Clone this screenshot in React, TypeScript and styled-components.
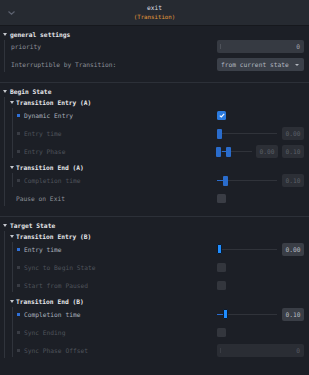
import React from 'react';
import styled, {createGlobalStyle} from 'styled-components';

type Tone = 'plain' | 'active' | 'dim';

const GlobalStyle = createGlobalStyle`
    html, body {
        margin: 0;
        padding: 0;
        background: #1c1f26;
    }
    body {
        font-family: "DejaVu Sans Mono", "Liberation Mono", monospace;
        font-size: 6.25px;
        color: #8d9199;
    }
`;

const Panel = styled.div`
    width: 309px;
    min-height: 375px;
    background: #1c1f26;
`;

const Header = styled.header`
    height: 26px;
    box-sizing: border-box;
    display: grid;
    grid-template-columns: 22px 1fr 22px;
    align-items: center;
    background: #262a31;
    border-bottom: 1px solid #16181d;
`;

const HeaderIcon = styled.span`
    display: flex;
    justify-content: center;
`;

const Titles = styled.div`
    display: flex;
    flex-direction: column;
    align-items: center;
    gap: 3px;
`;

const Title = styled.span`
    color: #dcdde0;
    line-height: 7px;
`;

const Subtitle = styled.span`
    color: #e39a3b;
    font-size: 5.75px;
    line-height: 7px;
`;

const Section = styled.section<{$top: number; $line?: boolean}>`
    padding: ${p => p.$top}px 5px 10px 0;
    border-bottom: ${p => p.$line ? '1px solid #2c3038' : 'none'};
`;

const Heading = styled.div<{$sub?: boolean; $mt?: number}>`
    height: 11px;
    display: flex;
    align-items: center;
    gap: ${p => p.$sub ? 2 : 3}px;
    padding-left: ${p => p.$sub ? 0 : 3}px;
    margin-top: ${p => p.$mt ?? 0}px;
    color: #e6e7ea;
    font-weight: bold;
`;

const Caret = styled.span`
    width: 0;
    height: 0;
    border-left: 2px solid transparent;
    border-right: 2px solid transparent;
    border-top: 3px solid #c4c7cd;
`;

const Group = styled.div<{$inset: number; $pad: number; $top?: number; $bottom?: number}>`
    display: flex;
    flex-direction: column;
    margin-left: ${p => p.$inset}px;
    padding: ${p => p.$top ?? 0}px 0 ${p => p.$bottom ?? 0}px ${p => p.$pad}px;
    border-left: 1px solid #30343c;
`;

const Row = styled.div<{$mt?: number}>`
    display: grid;
    grid-template-columns: 1fr 87px;
    align-items: center;
    height: 13px;
    margin-top: ${p => p.$mt ?? 0}px;
    & + & {
        margin-top: 5px;
    }
`;

const toneColor = {plain: '#8d9199', active: '#aab1bc', dim: '#4f535b'};

const Label = styled.span<{$tone: Tone; $indent?: number}>`
    display: flex;
    align-items: center;
    gap: 4.5px;
    padding-left: ${p => p.$indent ?? 0}px;
    color: ${p => toneColor[p.$tone]};
    white-space: nowrap;
`;

const Dot = styled.span<{$on?: boolean}>`
    width: 2.5px;
    height: 2.5px;
    background: ${p => p.$on ? '#2f70d8' : '#393c44'};
`;

const Field = styled.div<{$dim?: boolean}>`
    height: 13px;
    box-sizing: border-box;
    border-radius: 2px;
    display: flex;
    align-items: center;
    justify-content: space-between;
    padding: 0 4px 0 3px;
    background: ${p => p.$dim ? '#2a2d34' : '#363a42'};
    color: ${p => p.$dim ? '#565a62' : '#a2a6ae'};
`;

const Grip = styled.span<{$dim?: boolean}>`
    width: 1px;
    height: 5px;
    background: ${p => p.$dim ? '#3a3d44' : '#4e525a'};
`;

const Select = styled.div`
    height: 13px;
    box-sizing: border-box;
    border-radius: 2px;
    display: flex;
    align-items: center;
    justify-content: space-between;
    padding: 0 5px 0 4px;
    background: #3b4049;
    color: #b4b8c0;
`;

const SelectCaret = styled.span`
    width: 0;
    height: 0;
    border-left: 2px solid transparent;
    border-right: 2px solid transparent;
    border-top: 2.5px solid #b4b8c0;
`;

const Check = styled.span<{$on?: boolean; $dim?: boolean}>`
    width: 9px;
    height: 9px;
    border-radius: 1.5px;
    display: flex;
    align-items: center;
    justify-content: center;
    background: ${p => p.$on ? '#2b7be0' : p.$dim ? '#33363d' : '#3a3d45'};
`;

const Slider = styled.div<{$cols: string}>`
    display: grid;
    grid-template-columns: ${p => p.$cols};
    gap: ${p => p.$cols.includes('22px 22px') ? 4 : 5}px;
    align-items: center;
`;

const Track = styled.div`
    position: relative;
    height: 13px;
    &::before {
        content: '';
        position: absolute;
        left: 0;
        right: 0;
        top: 6px;
        height: 1px;
        background: #30333a;
    }
`;

const Fill = styled.span`
    position: absolute;
    top: 6px;
    height: 1px;
    background: #2a6ccc;
`;

const Handle = styled.span<{$active?: boolean}>`
    position: absolute;
    top: ${p => p.$active ? 1 : 1.5}px;
    width: 5px;
    height: 10px;
    box-sizing: border-box;
    border-radius: 1px;
    background: ${p => p.$active ? '#1f8dff' : '#2a6ccc'};
    border: ${p => p.$active ? '1px solid #0d1a2c' : 'none'};
`;

const ValueBox = styled.span<{$active?: boolean}>`
    height: 13px;
    border-radius: 2px;
    display: flex;
    align-items: center;
    justify-content: center;
    background: ${p => p.$active ? '#3a3e46' : '#2c2f36'};
    color: ${p => p.$active ? '#b9bdc4' : '#5b5f67'};
`;

const CheckMark = () => (
    <svg width="6" height="5" viewBox="0 0 6 5">
        <path d="M0.8 2.6 L2.3 4 L5.2 0.9" fill="none" stroke="#fff" strokeWidth="1.1"/>
    </svg>
);

const Range1 = ({value, active}: {value: number; active?: boolean}) => {
    const left = value * 55;
    return (
        <Slider $cols="1fr 22px">
            <Track>
                {left > 0 && <Fill style={{left: 0, width: left}}/>}
                <Handle $active={active} style={{left}}/>
            </Track>
            <ValueBox $active={active}>{value.toFixed(2)}</ValueBox>
        </Slider>
    );
};

const Range2 = ({from, to}: {from: number; to: number}) => (
    <Slider $cols="1fr 22px 22px">
        <Track>
            <Fill style={{left: 5, width: 4}}/>
            <Handle style={{left: -1}}/>
            <Handle style={{left: 8.5}}/>
        </Track>
        <ValueBox>{from.toFixed(2)}</ValueBox>
        <ValueBox>{to.toFixed(2)}</ValueBox>
    </Slider>
);

const Prop = ({label, tone, dot, indent, mt, children}: {
    label: string; tone: Tone; dot?: 'on' | 'off'; indent?: number; mt?: number; children: React.ReactNode;
}) => (
    <Row $mt={mt}>
        <Label $tone={tone} $indent={indent}>
            {dot && <Dot $on={dot === 'on'}/>}
            {label}
        </Label>
        <div>{children}</div>
    </Row>
);

const App: React.FunctionComponent = () => {
    return (
        <Panel>
            <GlobalStyle/>
            <Header>
                <HeaderIcon>
                    <svg width="7" height="4" viewBox="0 0 7 4">
                        <path d="M0.5 0.5 L3.5 3.2 L6.5 0.5" fill="none" stroke="#5d6270" strokeWidth="1.2"/>
                    </svg>
                </HeaderIcon>
                <Titles>
                    <Title>exit</Title>
                    <Subtitle>(Transition)</Subtitle>
                </Titles>
                <span/>
            </Header>

            <Section $top={3} $line>
                <Heading><Caret/>general settings</Heading>
                <Group $inset={4} $pad={6} $bottom={1}>
                    <Prop label="priority" tone="plain">
                        <Field><Grip/>0</Field>
                    </Prop>
                    <Prop label="Interruptible by Transition:" tone="plain">
                        <Select>from current state<SelectCaret/></Select>
                    </Prop>
                </Group>
            </Section>

            <Section $top={3} $line>
                <Heading><Caret/>Begin State</Heading>
                <Group $inset={4} $pad={5} $bottom={1}>
                    <Heading $sub><Caret/>Transition Entry (A)</Heading>
                    <Group $inset={2} $pad={4} $top={1}>
                        <Prop label="Dynamic Entry" tone="active" dot="on">
                            <Check $on><CheckMark/></Check>
                        </Prop>
                        <Prop label="Entry time" tone="dim" dot="off">
                            <Range1 value={0}/>
                        </Prop>
                        <Prop label="Entry Phase" tone="dim" dot="off">
                            <Range2 from={0} to={0.1}/>
                        </Prop>
                    </Group>
                    <Heading $sub $mt={4}><Caret/>Transition End (A)</Heading>
                    <Group $inset={2} $pad={4} $top={1}>
                        <Prop label="Completion time" tone="dim" dot="off">
                            <Range1 value={0.1}/>
                        </Prop>
                    </Group>
                    <Prop label="Pause on Exit" tone="plain" indent={6} mt={5}>
                        <Check/>
                    </Prop>
                </Group>
            </Section>

            <Section $top={3}>
                <Heading><Caret/>Target State</Heading>
                <Group $inset={4} $pad={5} $bottom={1}>
                    <Heading $sub><Caret/>Transition Entry (B)</Heading>
                    <Group $inset={2} $pad={4} $top={1}>
                        <Prop label="Entry time" tone="active" dot="on">
                            <Range1 value={0} active/>
                        </Prop>
                        <Prop label="Sync to Begin State" tone="dim" dot="off">
                            <Check $dim/>
                        </Prop>
                        <Prop label="Start from Paused" tone="dim" dot="off">
                            <Check $dim/>
                        </Prop>
                    </Group>
                    <Heading $sub $mt={4}><Caret/>Transition End (B)</Heading>
                    <Group $inset={2} $pad={4} $top={1}>
                        <Prop label="Completion time" tone="active" dot="on">
                            <Range1 value={0.1} active/>
                        </Prop>
                        <Prop label="Sync Ending" tone="dim" dot="off">
                            <Check $dim/>
                        </Prop>
                        <Prop label="Sync Phase Offset" tone="dim" dot="off">
                            <Field $dim><Grip $dim/>0</Field>
                        </Prop>
                    </Group>
                </Group>
            </Section>
        </Panel>
    );
}

export default App;
